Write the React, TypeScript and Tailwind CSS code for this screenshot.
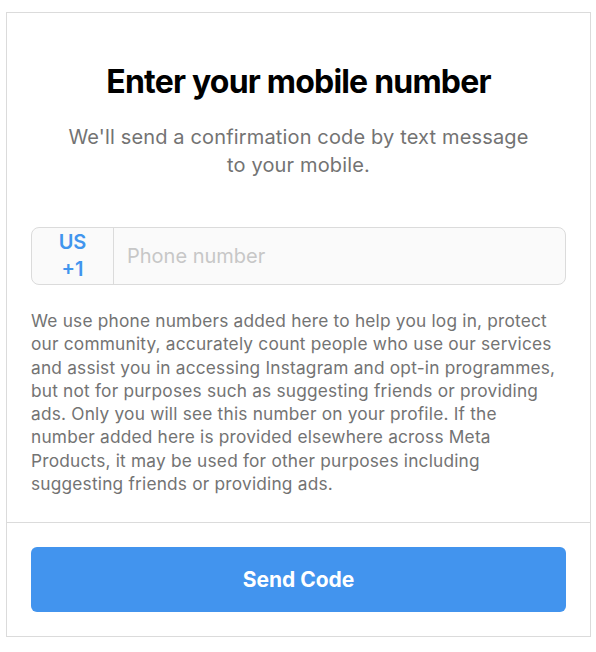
export default function App() {
  return (
    <div className="min-h-[652px] bg-white pl-[6px] pr-[5px] pt-[12px] font-['Inter',sans-serif]">
      <div className="border border-[#dbdbdb] bg-white">
        <div className="px-6 pt-[49px] pb-[27px]">
          <h1 className="text-center text-[32px] font-bold leading-[40px] tracking-[-0.8px] text-black">
            Enter your mobile number
          </h1>
          <p className="mt-[21px] text-center text-[20px] leading-[28px] tracking-[0.15px] text-[#737373]">
            We'll send a confirmation code by text message
            <br />
            to your mobile.
          </p>
          <div className="mt-[48px] flex h-[58px] items-stretch rounded-lg border border-[#dbdbdb] bg-[#fafafa]">
            <div className="flex w-[82px] flex-col items-center justify-center border-r border-[#dbdbdb] text-[20px] font-semibold leading-[27px] text-[#4195ee]">
              <span>US</span>
              <span>+1</span>
            </div>
            <input
              type="tel"
              placeholder="Phone number"
              className="min-w-0 flex-1 bg-transparent pl-[13px] text-[20px] text-black outline-none placeholder:text-[#c7c7c7]"
            />
          </div>
          <p className="mt-6 whitespace-nowrap text-[17.3px] leading-[23.3px] tracking-[0.2px] text-[#737373]">
            We use phone numbers added here to help you log in, protect
            <br />
            our community, accurately count people who use our services
            <br />
            and assist you in accessing Instagram and opt-in programmes,
            <br />
            but not for purposes such as suggesting friends or providing
            <br />
            ads. Only you will see this number on your profile. If the
            <br />
            number added here is provided elsewhere across Meta
            <br />
            Products, it may be used for other purposes including
            <br />
            suggesting friends or providing ads.
          </p>
        </div>
        <div className="border-t border-[#dbdbdb] px-6 py-6">
          <button className="flex h-[65px] w-full items-center justify-center rounded-md bg-[#4294ee] text-[21px] font-bold text-white">
            Send Code
          </button>
        </div>
      </div>
    </div>
  );
}
